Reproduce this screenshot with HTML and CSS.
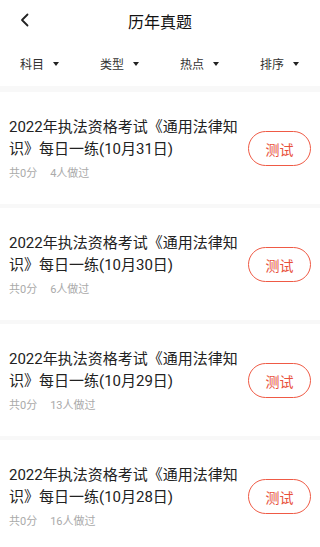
FILE: index.html
```html
<!DOCTYPE html>
<html lang="zh-CN">
<head>
<meta charset="utf-8">
<link rel="stylesheet" href="styles.css">
</head>
<body>
<div class="page">
  <header class="topbar">
    <span class="back"><svg width="10" height="14" viewBox="0 0 10 14"><path d="M7.5 1.5 L2 7 L7.5 12.5" fill="none" stroke="#222" stroke-width="1.8" stroke-linecap="round" stroke-linejoin="round"/></svg></span>
    <h1 class="title">历年真题</h1>
  </header>
  <nav class="filters">
    <div class="filter"><span>科目</span><i class="caret"></i></div>
    <div class="filter"><span>类型</span><i class="caret"></i></div>
    <div class="filter"><span>热点</span><i class="caret"></i></div>
    <div class="filter"><span>排序</span><i class="caret"></i></div>
  </nav>
  <main class="list">
    <div class="item">
      <div class="info">
        <div class="name">2022年执法资格考试《通用法律知识》每日一练(10月31日)</div>
        <div class="meta"><span>共0分</span><span>4人做过</span></div>
      </div>
      <button class="btn">测试</button>
    </div>
    <div class="item">
      <div class="info">
        <div class="name">2022年执法资格考试《通用法律知识》每日一练(10月30日)</div>
        <div class="meta"><span>共0分</span><span>6人做过</span></div>
      </div>
      <button class="btn">测试</button>
    </div>
    <div class="item">
      <div class="info">
        <div class="name">2022年执法资格考试《通用法律知识》每日一练(10月29日)</div>
        <div class="meta"><span>共0分</span><span>13人做过</span></div>
      </div>
      <button class="btn">测试</button>
    </div>
    <div class="item">
      <div class="info">
        <div class="name">2022年执法资格考试《通用法律知识》每日一练(10月28日)</div>
        <div class="meta"><span>共0分</span><span>16人做过</span></div>
      </div>
      <button class="btn">测试</button>
    </div>
  </main>
</div>
</body>
</html>
```
FILE: styles.css
```css
html, body {
  margin: 0;
  padding: 0;
  background: #fff;
}
body {
  font-family: Roboto, "Noto Sans CJK SC", sans-serif;
  color: #222;
  width: 320px;
  height: 547px;
  overflow: hidden;
}
.page {
  display: flex;
  flex-direction: column;
}
.topbar {
  height: 41px;
  display: flex;
  align-items: center;
  justify-content: center;
  position: relative;
}
.back {
  position: absolute;
  left: 20px;
  top: 13px;
  display: flex;
}
.title {
  margin: 0;
  font-size: 16px;
  font-weight: 400;
  color: #111;
}
.filters {
  display: grid;
  grid-template-columns: repeat(4, 80px);
  height: 45px;
  align-items: center;
}
.filter {
  display: flex;
  align-items: center;
  justify-content: center;
  gap: 9px;
  font-size: 12px;
  color: #333;
  padding-right: 1px;
}
.caret {
  width: 0;
  height: 0;
  border-left: 3.5px solid transparent;
  border-right: 3.5px solid transparent;
  border-top: 4px solid #222;
}
.list {
  background: #f8f8f8;
  padding-top: 6px;
  display: flex;
  flex-direction: column;
  gap: 4px;
}
.item {
  background: #fff;
  height: 112px;
  display: flex;
  align-items: center;
  padding: 0 9px 0 9px;
  box-sizing: border-box;
  justify-content: space-between;
}
.info {
  width: 232px;
  padding-top: 2px;
}
.name {
  font-size: 15px;
  line-height: 22px;
  color: #222;
}
.meta {
  margin-top: 6px;
  font-size: 11px;
  line-height: 16px;
  color: #aaa;
  display: flex;
  gap: 13px;
}
.btn {
  width: 63px;
  height: 35px;
  border: 1px solid #ef5a45;
  border-radius: 18px;
  background: #fff;
  color: #e8503b;
  font-family: "Noto Sans CJK SC", sans-serif;
  font-size: 14px;
  padding: 0;
  margin-top: 1px;
}
```
